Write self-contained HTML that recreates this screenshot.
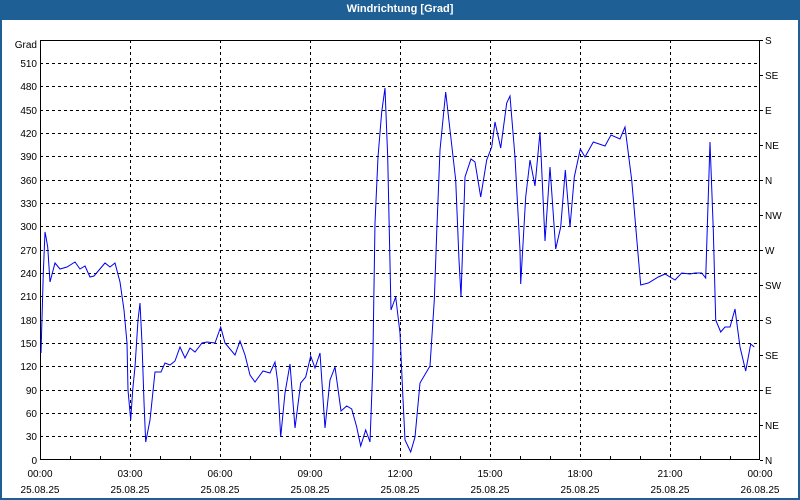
<!DOCTYPE html>
<html><head><meta charset="utf-8"><style>
html,body{margin:0;padding:0;background:#fff}
body{width:800px;height:500px;overflow:hidden;position:relative;font-family:"Liberation Sans",Tahoma,sans-serif}
#t{position:absolute;left:0;top:0;width:800px;height:20px;background:#1e5f96;color:#fff;font-weight:bold;font-size:11px;line-height:19px;text-align:center}
#b{position:absolute;left:0;top:20px;width:796px;height:478px;border:2px solid #1e5f96;border-top:none}
svg{position:absolute;left:0;top:0}
</style></head><body>
<div id="t">Windrichtung [Grad]</div>
<div id="b"></div>
<svg width="800" height="500" font-family="Liberation Sans, sans-serif" font-size="10">
<g stroke="#000" stroke-dasharray="3,3" stroke-width="1">
<path d="M40 63.5H760M40 86.5H760M40 110.5H760M40 133.5H760M40 156.5H760M40 180.5H760M40 203.5H760M40 226.5H760M40 250.5H760M40 273.5H760M40 296.5H760M40 320.5H760M40 343.5H760M40 366.5H760M40 390.5H760M40 413.5H760M40 436.5H760"/>
<path d="M130.5 40V460M220.5 40V460M310.5 40V460M400.5 40V460M490.5 40V460M580.5 40V460M670.5 40V460"/>
</g>
<rect x="40.5" y="40.5" width="719" height="419" fill="none" stroke="#000"/>
<g stroke="#000">
<path d="M70.5 460v-4M100.5 460v-4M160.5 460v-4M190.5 460v-4M250.5 460v-4M280.5 460v-4M340.5 460v-4M370.5 460v-4M430.5 460v-4M460.5 460v-4M520.5 460v-4M550.5 460v-4M610.5 460v-4M640.5 460v-4M700.5 460v-4M730.5 460v-4"/>
<path d="M760 40.5h3M760 75.5h3M760 110.5h3M760 145.5h3M760 180.5h3M760 215.5h3M760 250.5h3M760 285.5h3M760 320.5h3M760 355.5h3M760 390.5h3M760 425.5h3M760 460.5h3"/>
</g>
<g text-anchor="end">
<text x="37" y="48">Grad</text>
<text x="37" y="67">510</text><text x="37" y="90">480</text><text x="37" y="114">450</text><text x="37" y="137">420</text><text x="37" y="160">390</text><text x="37" y="184">360</text><text x="37" y="207">330</text><text x="37" y="230">300</text><text x="37" y="254">270</text><text x="37" y="277">240</text><text x="37" y="300">210</text><text x="37" y="324">180</text><text x="37" y="347">150</text><text x="37" y="370">120</text><text x="37" y="394">90</text><text x="37" y="417">60</text><text x="37" y="440">30</text><text x="37" y="464">0</text>
</g>
<g>
<text x="765" y="44">S</text><text x="765" y="79">SE</text><text x="765" y="114">E</text><text x="765" y="149">NE</text><text x="765" y="184">N</text><text x="765" y="219">NW</text><text x="765" y="254">W</text><text x="765" y="289">SW</text><text x="765" y="324">S</text><text x="765" y="359">SE</text><text x="765" y="394">E</text><text x="765" y="429">NE</text><text x="765" y="464">N</text>
</g>
<g text-anchor="middle">
<text x="40" y="477">00:00</text><text x="130" y="477">03:00</text><text x="220" y="477">06:00</text><text x="310" y="477">09:00</text><text x="400" y="477">12:00</text><text x="490" y="477">15:00</text><text x="580" y="477">18:00</text><text x="670" y="477">21:00</text><text x="760" y="477">00:00</text>
<text x="40" y="493">25.08.25</text><text x="130" y="493">25.08.25</text><text x="220" y="493">25.08.25</text><text x="310" y="493">25.08.25</text><text x="400" y="493">25.08.25</text><text x="490" y="493">25.08.25</text><text x="580" y="493">25.08.25</text><text x="670" y="493">25.08.25</text><text x="760" y="493">26.08.25</text>
</g>
<polyline fill="none" stroke="#0000ee" stroke-width="1" points="41,353 43.3,273 45,232 46,237 47.7,247 50,282 55,263 60,269 67,267 75,262 80,269 85,266 90,277 94,276 105,263 110,267 115,263 120,282 124,310 127,343 128,390 130.7,420 132.7,390 135,367 138,320 140,303 142,343 144,402 145.7,442 150,420 155,372 161,372 165,363 170,365 175,361 180,347 185,358 190,348 195,352 202,343 207,342 215,343 220.7,327 225,343 235,355 240,341 245,355 250,375 255,382 263,371 270,373 275,362 277.7,382 280.7,437 285,393 290,364 295,428 300.7,383 305.7,377 310.7,356 315,368 320,353 325,428 330,380 335,367 341,411 346.7,406 351.7,409 356.7,427 360.7,446 365.7,430 370,442 372.7,370 375,223 378,157 381.7,112 385,88 387.7,157 391,310 395.7,297 400,333 402.7,393 405,440 410.7,452 415,437 420,383 430,366 434.3,300 436.7,233 440,150 445.7,92 450,130 455.7,180 459,260 461,297 465,177 471,159 475,162 480.7,197 486.7,160 491.7,147 495,122 500.7,148 506.7,103 510,96 515,157 520,250 520.7,284 525.7,197 530,160 535,186 540,132 545,241 550,167 555.7,249 560.7,227 565.3,170 570,227 574.3,177 580.3,149 585,157 593.3,142 605,146 611,135 620,139 625,127 631.7,180 640.7,285 648.3,283 658.3,277 665,274 675,280 681.7,273 690,274 695,273 701.7,273 705.7,278 710,142 713.3,230 715.7,320 720.7,332 725,327 730,327 735,309 740,347 745.7,371 750.7,344 754.3,347"/>
</svg>
</body></html>
